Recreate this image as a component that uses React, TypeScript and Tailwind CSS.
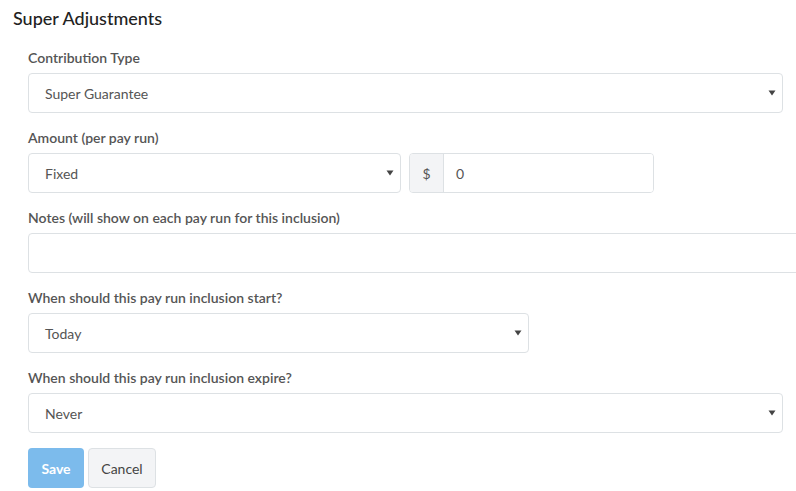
import React from "react";

const font = { fontFamily: "Lato, 'Open Sans', Arial, sans-serif" };

function Caret() {
  return (
    <svg width="8" height="6" viewBox="0 0 8 6" className="absolute right-[6px] top-1/2 -translate-y-1/2">
      <path d="M0.5 0.5 L7.5 0.5 L4 5.5 Z" fill="#444" />
    </svg>
  );
}

function SelectBox({ value, width }: { value: string; width: string }) {
  return (
    <div
      className={`relative h-[40px] ${width} flex items-center rounded-[4px] border border-[#dde1e4] bg-white pl-[16px] text-[14px] text-[#555]`}
    >
      {value}
      <Caret />
    </div>
  );
}

function Label({ children }: { children: React.ReactNode }) {
  return (
    <div className="h-[20px] mb-[5px] text-[14px] leading-[20px] font-semibold text-[#555]">{children}</div>
  );
}

export default function App() {
  return (
    <div className="w-[796px] h-[491px] overflow-hidden bg-white" style={font}>
      <div className="pl-[13px] pt-[6px] text-[18px] leading-[24px] font-medium text-[#222]">Super Adjustments</div>
      <div className="pl-[28px] pt-[18px]">
        <Label>Contribution Type</Label>
        <SelectBox value="Super Guarantee" width="w-[755px]" />

        <div className="mt-[15px]">
          <Label>Amount (per pay run)</Label>
          <div className="flex gap-[8px]">
            <SelectBox value="Fixed" width="w-[373px]" />
            <div className="flex h-[40px] w-[245px] rounded-[4px] border border-[#dde1e4] overflow-hidden text-[14px] text-[#555]">
              <div className="w-[34px] flex items-center justify-center bg-[#f3f4f6] border-r border-[#dde1e4]">$</div>
              <div className="flex-1 flex items-center pl-[12px] bg-white">0</div>
            </div>
          </div>
        </div>

        <div className="mt-[15px]">
          <Label>Notes (will show on each pay run for this inclusion)</Label>
          <div className="h-[40px] w-[800px] rounded-[4px] border border-[#dde1e4] bg-white" />
        </div>

        <div className="mt-[15px]">
          <Label>When should this pay run inclusion start?</Label>
          <SelectBox value="Today" width="w-[501px]" />
        </div>

        <div className="mt-[15px]">
          <Label>When should this pay run inclusion expire?</Label>
          <SelectBox value="Never" width="w-[755px]" />
        </div>

        <div className="mt-[15px] flex gap-[4px]">
          <button className="h-[40px] w-[56px] rounded-[4px] bg-[#7cbbec] text-[14px] font-bold text-white">Save</button>
          <button className="h-[40px] w-[68px] rounded-[4px] border border-[#dde1e4] bg-[#f3f4f6] text-[14px] text-[#444]">Cancel</button>
        </div>
      </div>
    </div>
  );
}
